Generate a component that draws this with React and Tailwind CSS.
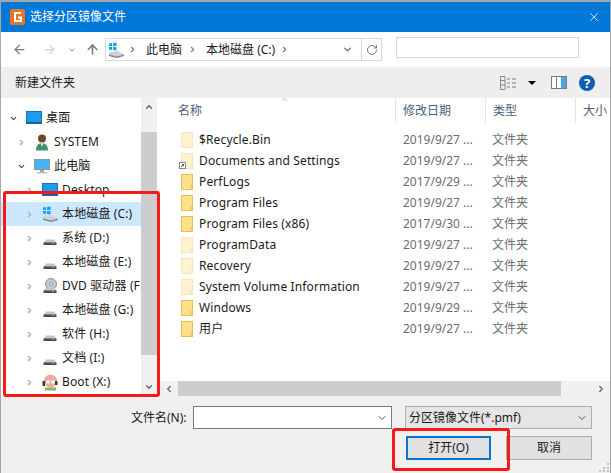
import { ChevronRight, ChevronDown, ChevronUp, ChevronLeft, ArrowLeft, ArrowRight, ArrowUp, RotateCw, X } from 'lucide-react';

const font = 'font-["Noto_Sans","Noto_Sans_CJK_SC",sans-serif]';

const files = [
  { name: '$Recycle.Bin', date: '2019/9/27', faded: true },
  { name: 'Documents and Settings', date: '2019/9/27', faded: true, link: true },
  { name: 'PerfLogs', date: '2017/9/29' },
  { name: 'Program Files', date: '2019/9/27' },
  { name: 'Program Files (x86)', date: '2017/9/30' },
  { name: 'ProgramData', date: '2019/9/27', faded: true },
  { name: 'Recovery', date: '2019/9/27', faded: true },
  { name: 'System Volume Information', date: '2019/9/27', faded: true },
  { name: 'Windows', date: '2019/9/29' },
  { name: '用户', date: '2019/9/27' },
];

const tree = [
  { label: '桌面', icon: 'screen', pad: 'pl-2', open: true },
  { label: 'SYSTEM', icon: 'user', pad: 'pl-4' },
  { label: '此电脑', icon: 'pc', pad: 'pl-4', open: true },
  { label: 'Desktop', icon: 'screen', pad: 'pl-6' },
  { label: '本地磁盘 (C:)', icon: 'win', pad: 'pl-6', selected: true },
  { label: '系统 (D:)', icon: 'disk', pad: 'pl-6' },
  { label: '本地磁盘 (E:)', icon: 'disk', pad: 'pl-6' },
  { label: 'DVD 驱动器 (F:)', icon: 'dvd', pad: 'pl-6' },
  { label: '本地磁盘 (G:)', icon: 'disk', pad: 'pl-6' },
  { label: '软件 (H:)', icon: 'disk', pad: 'pl-6' },
  { label: '文档 (I:)', icon: 'disk', pad: 'pl-6' },
  { label: 'Boot (X:)', icon: 'boot', pad: 'pl-6' },
];

function Folder({ faded, link }) {
  return (
    <svg width="16" height="16" viewBox="0 0 16 16" className="shrink-0">
      <g opacity={faded ? 0.4 : 1}>
        <rect x="2.5" y="0.5" width="11" height="15" fill="#fde08a" stroke="#e9c050" />
        <path d="M12 15.5V11.5H13.5" fill="none" stroke="#e9c050" />
      </g>
      {link && (
        <g>
          <rect x="0.5" y="9.5" width="6" height="6" fill="#fff" stroke="#8a8a8a" />
          <path d="M2 14L4.5 11.5M3 11.5H4.5V13" fill="none" stroke="#1b5fc0" />
        </g>
      )}
    </svg>
  );
}

function DiskBase() {
  return (
    <g>
      <path d="M2 12L4 9.5H12L14 12V13H2Z" fill="#c4c6c8" />
      <rect x="1.5" y="12.5" width="13" height="2.5" fill="#44494e" />
      <rect x="10" y="13" width="2" height="1" fill="#4cd964" />
    </g>
  );
}

function TreeIcon({ type }) {
  if (type === 'screen') {
    return (
      <svg width="16" height="16" viewBox="0 0 16 16" className="shrink-0">
        <rect x="0.5" y="1.5" width="15" height="12" fill="#1e9bea" stroke="#1273b8" />
        <rect x="1" y="12" width="14" height="1.5" fill="#0c5e9e" />
      </svg>
    );
  }
  if (type === 'pc') {
    return (
      <svg width="16" height="16" viewBox="0 0 16 16" className="shrink-0">
        <rect x="0.5" y="1.5" width="15" height="10" fill="#49b4f2" stroke="#8a98a5" />
        <rect x="6" y="12" width="4" height="2" fill="#9aa4ae" />
        <rect x="3" y="14" width="10" height="1.5" fill="#b6bec6" />
      </svg>
    );
  }
  if (type === 'user') {
    return (
      <svg width="16" height="17" viewBox="0 0 16 17" className="shrink-0">
        <circle cx="8" cy="4.5" r="4" fill="#6e4529" />
        <path d="M2 16.5C2 11 5 9 8 9S14 11 14 16.5Z" fill="#3f9169" />
        <path d="M6.5 9H9.5L8 13Z" fill="#e8e8e8" />
      </svg>
    );
  }
  if (type === 'win') {
    return (
      <svg width="16" height="16" viewBox="0 0 16 16" className="shrink-0">
        <path d="M1 1.5L4 1V4H1ZM5 1L8.5 0.5V4H5ZM1 5H4V8L1 7.5ZM5 5H8.5V8.5L5 8Z" fill="#0ea5ee" />
        <path d="M1 10.5L9 9L16 12V13L9 15L1 13Z" fill="#d0d3d6" />
        <path d="M1 12.5L9 14.5L16 12.5V14L9 16L1 14Z" fill="#7f858b" />
      </svg>
    );
  }
  if (type === 'dvd') {
    return (
      <svg width="16" height="16" viewBox="0 0 16 16" className="shrink-0">
        <circle cx="9" cy="6" r="5.5" fill="#c4c8cc" stroke="#8d9196" />
        <circle cx="9" cy="6" r="1.5" fill="#fff" stroke="#8d9196" />
        <DiskBase />
      </svg>
    );
  }
  if (type === 'boot') {
    return (
      <svg width="16" height="17" viewBox="0 0 16 17" className="shrink-0">
        <circle cx="8.5" cy="7" r="6.5" fill="#f0aaa2" />
        <circle cx="6" cy="8" r="1.8" fill="#fff" />
        <circle cx="11" cy="8" r="1.8" fill="#fff" />
        <path d="M0.5 7V12H3V7ZM13 7H15.5V11H13Z" fill="#3a3a3a" />
        <path d="M3 13.5H14V16.5H3Z" fill="#7cc05a" />
      </svg>
    );
  }
  return (
    <svg width="16" height="16" viewBox="0 0 16 16" className="shrink-0">
      <DiskBase />
    </svg>
  );
}

function TreeRow({ row }) {
  return (
    <div className={`flex items-center h-6 whitespace-nowrap ${row.pad} ${row.selected ? 'bg-[#cce8ff]' : ''}`}>
      {row.open ? (
        <ChevronDown size={9} strokeWidth={3} className="shrink-0 text-[#404040]" />
      ) : (
        <ChevronRight size={9} strokeWidth={3} className="shrink-0 text-[#a6a6a6]" />
      )}
      <span className="w-2 shrink-0" />
      <TreeIcon type={row.icon} />
      <span className="ml-1 tracking-[0.13px] text-[#1a1a1a]">{row.label}</span>
    </div>
  );
}

function HeaderCell({ className, children }) {
  return (
    <div className={`h-[25px] border-r border-[#e5e5e5] pl-[7px] pt-[5px] text-[#4c607a] ${className}`}>{children}</div>
  );
}

export default function App() {
  return (
    <div className={`relative flex flex-col w-[611px] h-[473px] overflow-hidden bg-[#f0f0f0] border-x border-t-2 border-[#a6a6a6] text-[12px] leading-4 ${font}`}>
      {/* title bar */}
      <div className="flex items-center h-[30px] shrink-0 bg-[#0078d7] text-white pl-[9px] pr-[9px]">
        <svg width="15" height="16" viewBox="0 0 15 16" className="shrink-0">
          <rect width="15" height="16" rx="2" fill="#e8742a" />
          <path d="M11 4H5V12H11V8.5H8" fill="none" stroke="#fff" strokeWidth="2" />
        </svg>
        <span className="ml-[5px]">选择分区镜像文件</span>
        <X size={14} strokeWidth={1.25} className="ml-auto" />
      </div>

      {/* nav */}
      <div className="flex items-center h-[35px] shrink-0 bg-white">
        <ArrowLeft size={15} strokeWidth={2} className="ml-[11px] text-[#7a7a7a]" />
        <ArrowRight size={15} strokeWidth={2} className="ml-[15px] text-[#d4d4d4]" />
        <ChevronDown size={8} strokeWidth={3} className="ml-[11px] text-[#8f8f8f]" />
        <ArrowUp size={15} strokeWidth={2.5} className="ml-[9px] text-[#7a7a7a]" />
        <div className="flex items-center ml-[5px] w-[277px] h-[23px] border border-[#d9d9d9] pl-[2px]">
          <TreeIcon type="win" />
          <ChevronRight size={9} strokeWidth={3} className="ml-1 text-[#7a7a7a]" />
          <span className="ml-[9px] text-[#1a1a1a]">此电脑</span>
          <ChevronRight size={9} strokeWidth={3} className="ml-[6px] text-[#7a7a7a]" />
          <span className="ml-[9px] text-[#1a1a1a]">本地磁盘 (C:)</span>
          <ChevronRight size={9} strokeWidth={3} className="ml-[5px] text-[#7a7a7a]" />
          <ChevronDown size={11} strokeWidth={3} className="ml-auto mr-[8px] text-[#6f6f6f]" />
          <div className="flex items-center justify-center w-5 h-full border-l border-[#d9d9d9]">
            <RotateCw size={12} strokeWidth={2} className="text-[#7a7a7a]" />
          </div>
        </div>
        <div className="ml-[14px] w-[183px] h-[21px] -mt-1 border border-[#d9d9d9]" />
      </div>

      {/* toolbar */}
      <div className="flex items-center h-[31px] shrink-0 bg-[#eeeeee] pl-[14px]">
        <span className="text-[#1a1a1a]">新建文件夹</span>
        <svg width="16" height="14" viewBox="0 0 16 14" className="ml-auto">
          <path d="M.5.5H5V13.5H.5ZM.5 4.5H5M.5 9H5" fill="none" stroke="#8a8a8a" />
          <path d="M7 3H10M12 3H16M7 7H10M12 7H16M7 11H10M12 11H16" stroke="#6f7f8f" />
        </svg>
        <svg width="8" height="4" viewBox="0 0 8 4" className="ml-[12px]">
          <path d="M0 0H8L4 4Z" fill="#000" />
        </svg>
        <svg width="16" height="13" viewBox="0 0 16 13" className="ml-[15px]">
          <rect x=".5" y=".5" width="15" height="12" fill="#fff" stroke="#7a7a7a" />
          <rect x="10" y="1" width="5" height="11" fill="#4aa6e8" />
          <path d="M5.5 1V12" stroke="#7a7a7a" />
        </svg>
        <svg width="16" height="16" viewBox="0 0 16 16" className="ml-[12px] mr-[15px]">
          <circle cx="8" cy="8" r="8" fill="#0f5fae" />
          <text x="8" y="12.5" textAnchor="middle" fontSize="13" fontWeight="700" fill="#fff">?</text>
        </svg>
      </div>

      {/* main */}
      <div className="flex h-[298px] shrink-0 bg-white">
        <div className="w-[140px] shrink-0 overflow-hidden pt-2">
          {tree.map(row => <TreeRow key={row.label} row={row} />)}
        </div>
        <div className="flex flex-col w-4 shrink-0 bg-[#f0f0f0]">
          <div className="flex items-center justify-center h-[34px] pb-[16px]">
            <ChevronUp size={10} strokeWidth={3} className="text-[#606060]" />
          </div>
          <div className="h-[223px] bg-[#cdcdcd]" />
          <div className="flex items-end justify-center flex-1 pb-[4px]">
            <ChevronDown size={10} strokeWidth={3} className="text-[#606060]" />
          </div>
        </div>
        <div className="w-[3px] shrink-0" />
        <div className="relative flex flex-col flex-1 min-w-0">
          <div className="flex shrink-0">
            <HeaderCell className="w-[236px] pl-[18px]">名称</HeaderCell>
            <HeaderCell className="w-[90px]">修改日期</HeaderCell>
            <HeaderCell className="w-[90px]">类型</HeaderCell>
            <div className="pl-[7px] pt-[5px] text-[#4c607a] whitespace-nowrap">大小</div>
          </div>
          {/* sort arrow */}
          <ChevronUp size={9} strokeWidth={1.5} className="absolute left-[120px] top-[-3px] text-[#8a8a8a]" />
          <div className="flex-1 pt-[6px] min-h-0">
            {files.map(f => (
              <div key={f.name} className="flex items-center h-[21px] whitespace-nowrap">
                <div className="flex items-center w-[236px] pl-[19px]">
                  <Folder faded={f.faded} link={f.link} />
                  <span className="ml-[4px] tracking-[0.13px] text-[#1a1a1a]">{f.name}</span>
                </div>
                <span className="w-[89px] pl-[7px] text-[#6d6d6d]">{f.date} ...</span>
                <span className="pl-[7px] text-[#6d6d6d]">文件夹</span>
              </div>
            ))}
          </div>
          <div className="flex items-center h-[15px] shrink-0 bg-[#f0f0f0]">
            <ChevronLeft size={10} strokeWidth={3} className="ml-[4px] text-[#606060]" />
            <div className="ml-[4px] w-[383px] h-full bg-[#cdcdcd]" />
            <ChevronRight size={10} strokeWidth={3} className="ml-auto mr-[4px] text-[#606060]" />
          </div>
        </div>
      </div>

      {/* bottom */}
      <div className="relative flex-1 pt-[10px]">
        <div className="flex items-center h-[23px]">
          <span className="ml-[130px] w-[62px] text-[#1a1a1a] whitespace-nowrap">文件名(N):</span>
          <div className="flex items-center justify-end w-[199px] h-full bg-white border border-[#7a7a7a] pr-[3px]">
            <ChevronDown size={12} strokeWidth={1.75} className="text-[#404040]" />
          </div>
          <div className="flex items-center ml-[13px] w-[187px] h-full bg-[#e5e5e5] border border-[#adadad] pl-[3px] pr-[3px] text-[#1a1a1a]">
            <span>分区镜像文件(*.pmf)</span>
            <ChevronDown size={12} strokeWidth={1.75} className="ml-auto text-[#404040]" />
          </div>
        </div>
        <div className="flex mt-[7px] ml-[405px] gap-[15px]">
          <button className="w-[85px] h-6 bg-[#e1e1e1] border-2 border-[#0078d7] text-[#1a1a1a]">打开(O)</button>
          <button className="w-[86px] h-6 bg-[#e1e1e1] border border-[#adadad] text-[#1a1a1a]">取消</button>
        </div>
        {/* resize grip */}
        <svg width="10" height="10" viewBox="0 0 10 10" className="absolute right-[1px] bottom-[1px]">
          <path d="M8 1h2v2H8ZM4 5h2v2H4ZM8 5h2v2H8ZM0 8h2v2H0ZM4 8h2v2H4ZM8 8h2v2H8Z" fill="#c4c4c4" />
        </svg>
      </div>

      {/* red annotation boxes */}
      <div className="absolute left-[2px] top-[189px] w-[157px] h-[206px] border-[3px] border-[#f5191a] rounded-[3px]" />
      <div className="absolute left-[391px] top-[426px] w-[118px] h-[43px] border-[3px] border-[#f5191a] rounded-[3px]" />
    </div>
  );
}
